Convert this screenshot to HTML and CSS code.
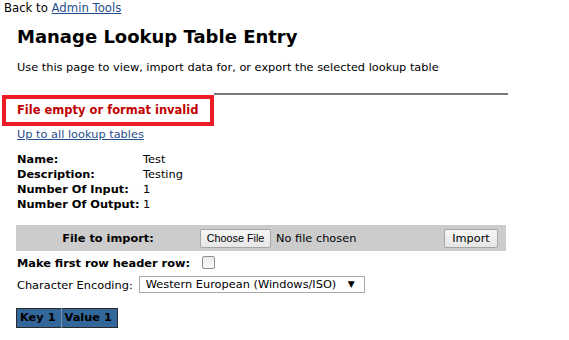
FILE: index.html
```html
<!DOCTYPE html>
<html>
<head>
<meta charset="utf-8">
<title>Manage Lookup Table Entry</title>
<link rel="stylesheet" href="styles.css">
</head>
<body>
<div class="back">Back to <a href="#">Admin Tools</a></div>
<div class="main">
  <h1 class="title">Manage Lookup Table Entry</h1>
  <p class="intro">Use this page to view, import data for, or export the selected lookup table</p>
  <hr class="rule">
  <div class="error">File empty or format invalid</div>
  <a class="up" href="#">Up to all lookup tables</a>
  <table class="info">
    <tr><th>Name:</th><td>Test</td></tr>
    <tr><th>Description:</th><td>Testing</td></tr>
    <tr><th>Number Of Input:</th><td>1</td></tr>
    <tr><th>Number Of Output:</th><td>1</td></tr>
  </table>
  <div class="import-bar">
    <div class="import-label">File to import:</div>
    <div class="file-pick">
      <button class="btn btn-file" type="button">Choose File</button>
      <span class="file-none">No file chosen</span>
    </div>
    <button class="btn btn-import" type="button">Import</button>
  </div>
  <div class="opt-row">
    <span class="opt-bold">Make first row header row:</span>
    <span class="checkbox"></span>
  </div>
  <div class="opt-row enc-row">
    <span>Character Encoding:</span>
    <span class="select"><span class="select-text">Western European (Windows/ISO)</span><span class="select-arrow">&#9660;</span></span>
  </div>
  <table class="data">
    <tr><th>Key 1</th><th>Value 1</th></tr>
  </table>
</div>
</body>
</html>
```
FILE: styles.css
```css
html, body {
  margin: 0;
  padding: 0;
  background: #fff;
}
body {
  font-family: "DejaVu Sans", Verdana, sans-serif;
  font-size: 11.35px;
  color: #000;
}
a {
  color: #1f4e8c;
}
.back {
  padding: 1px 0 0 4px;
  font-size: 11.7px;
  line-height: 14px;
}
.main {
  margin-left: 16px;
  width: 490px;
}
.title {
  font-size: 18px;
  font-weight: bold;
  margin: 10px 0 0 1px;
  line-height: 24px;
}
.intro {
  margin: 11px 0 0 1px;
  line-height: 15px;
}
.rule {
  margin: 18px -2px 0 -8px;
  border: 0;
  height: 2px;
  background: #787878;
}
.error {
  position: relative;
  margin: 0 0 0 -14px;
  width: 193px;
  height: 23px;
  border: 4px solid #ed1c24;
  background: #fff;
  box-shadow: 0 -3px 0 #fff;
  padding-left: 11px;
  color: #c00000;
  font-weight: bold;
  font-size: 11.5px;
  line-height: 22px;
  white-space: nowrap;
}
.up {
  display: inline-block;
  margin: 1px 0 0 1px;
  line-height: 15px;
}
.info {
  margin-top: 10px;
  border-collapse: collapse;
}
.info th, .info td {
  padding: 0 0 0 1px;
  line-height: 15px;
  text-align: left;
  vertical-align: top;
  white-space: nowrap;
}
.info th {
  font-weight: bold;
  width: 125px;
}
.import-bar {
  margin-top: 13px;
  height: 26px;
  background: #cccccc;
  display: flex;
  align-items: center;
  padding-right: 8px;
}
.import-label {
  width: 184px;
  text-align: center;
  font-weight: bold;
}
.file-pick {
  flex: 1;
  display: flex;
  align-items: center;
  gap: 5px;
}
.btn {
  height: 19px;
  border: 1px solid #a6a6a6;
  border-radius: 2px;
  background: linear-gradient(#f6f6f6, #e6e6e6);
  padding: 0;
  color: #000;
  white-space: nowrap;
}
.btn-file {
  font-family: "Liberation Sans", Arial, sans-serif;
  font-size: 10.8px;
  width: 71px;
}
.btn-import {
  font-family: "DejaVu Sans", Verdana, sans-serif;
  font-size: 11.35px;
  width: 54px;
}
.opt-row {
  display: flex;
  align-items: center;
  margin-left: 1px;
  height: 17px;
  margin-top: 3px;
}
.opt-bold {
  font-weight: bold;
  width: 185px;
  white-space: nowrap;
}
.checkbox {
  width: 11px;
  height: 11px;
  border: 1px solid #8f8f8f;
  border-radius: 2px;
  background: linear-gradient(#ececec, #fafafa);
}
.enc-row {
  margin-top: 5px;
  gap: 6px;
}
.select {
  display: flex;
  align-items: center;
  justify-content: space-between;
  width: 209px;
  height: 15px;
  border: 1px solid #a9a9a9;
  padding: 0 9px 0 6px;
  line-height: 15px;
  white-space: nowrap;
}
.select-arrow {
  font-size: 9px;
}
.data {
  margin-top: 15px;
  border-collapse: collapse;
  border: 1px solid #2a2a2a;
  background: #336699;
}
.data th {
  font-weight: bold;
  padding: 1px 5px 2px 3px;
  line-height: 15px;
  color: #000;
  text-align: left;
  white-space: nowrap;
}
.data th + th {
  border-left: 1px solid #7a8fa6;
}
```
